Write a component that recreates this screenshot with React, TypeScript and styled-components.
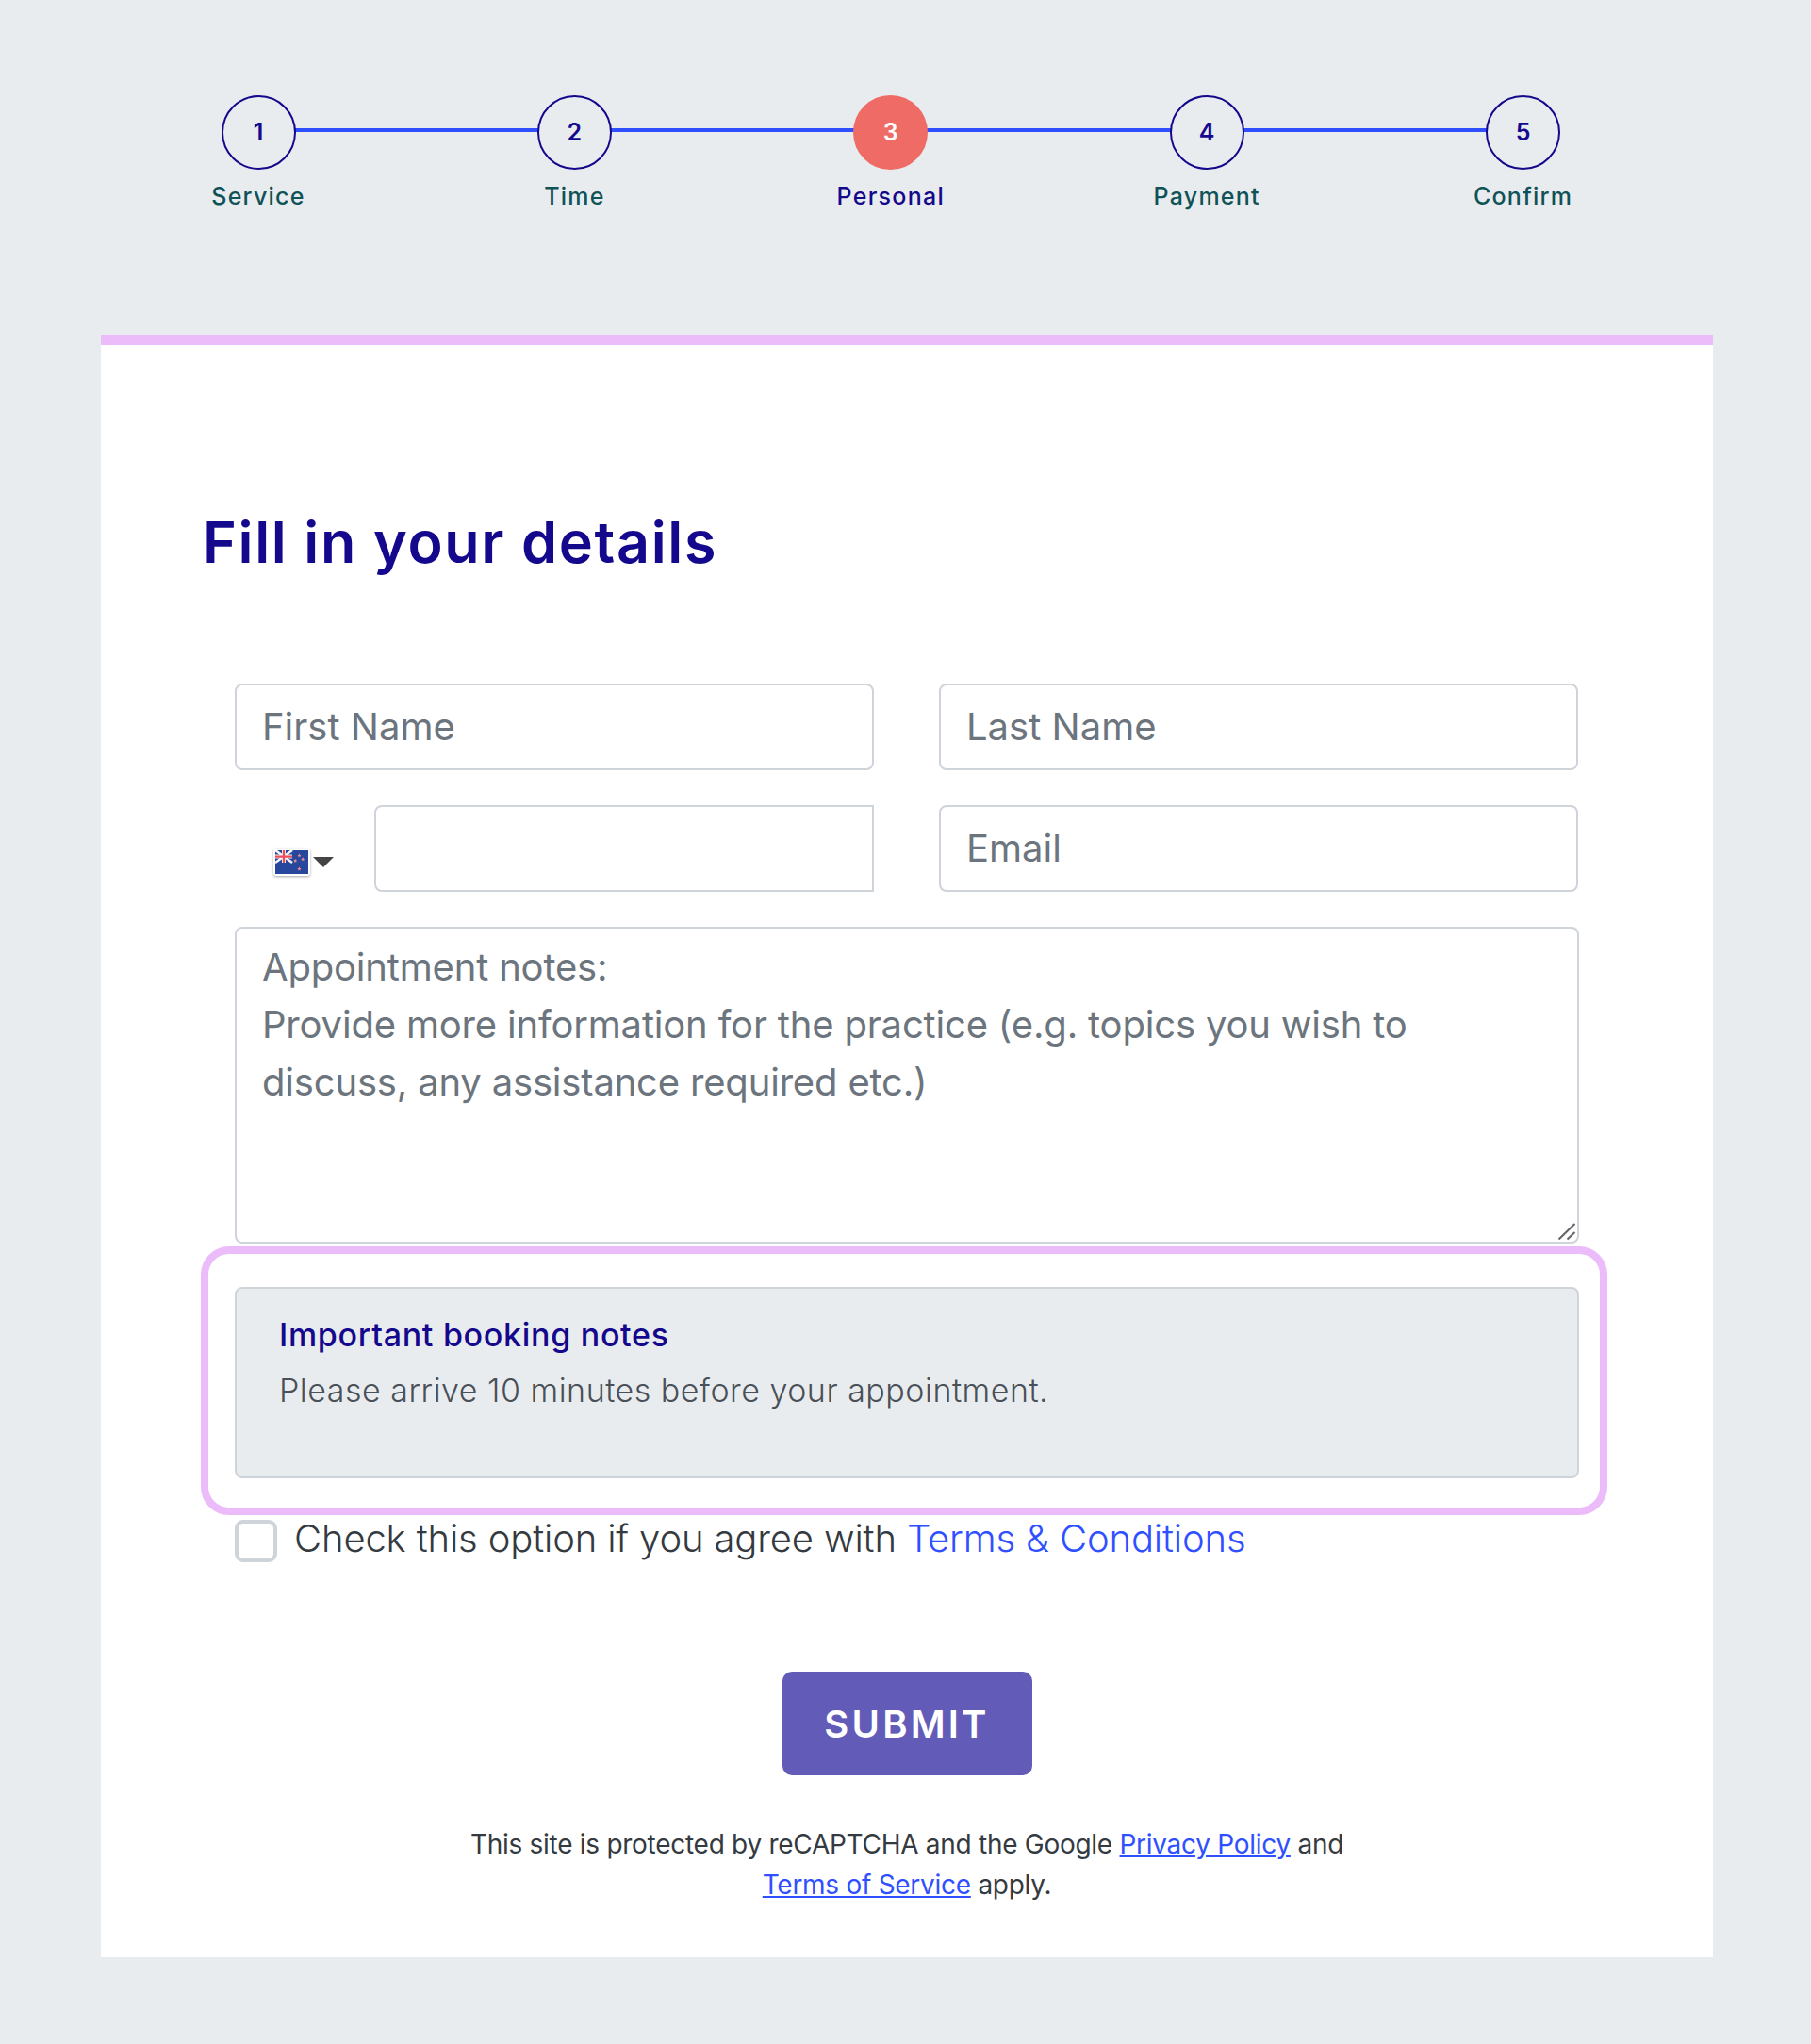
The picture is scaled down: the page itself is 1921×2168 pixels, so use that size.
import React from "react";
import styled, { createGlobalStyle } from "styled-components";

const steps = [
  { n: 1, label: "Service" },
  { n: 2, label: "Time" },
  { n: 3, label: "Personal", active: true },
  { n: 4, label: "Payment" },
  { n: 5, label: "Confirm" },
];

const starPoints = [
  [24, 5],
  [27.5, 8.5],
  [20, 10],
  [24, 18],
];

function Flag() {
  return (
    <svg width="35" height="25" viewBox="0 0 33 23" preserveAspectRatio="none">
      <rect width="33" height="23" fill="#27479c" />
      <path d="M0 0L17 12M17 0L0 12" stroke="#f3f3f6" strokeWidth="2.4" />
      <path d="M8.5 0V12M0 6H17" stroke="#f3f3f6" strokeWidth="3.8" />
      <path d="M8.5 0V12M0 6H17" stroke="#ee4c5c" strokeWidth="2.1" />
      {starPoints.map(([x, y]) => (
        <path
          key={`${x}-${y}`}
          d={`M${x} ${y - 2}L${x + 0.7} ${y - 0.5}L${x + 2} ${y}L${x + 0.8} ${y + 0.6}L${x + 1.2} ${y + 2}L${x} ${y + 1}L${x - 1.2} ${y + 2}L${x - 0.8} ${y + 0.6}L${x - 2} ${y}L${x - 0.7} ${y - 0.5}Z`}
          fill="#f08a94"
        />
      ))}
    </svg>
  );
}

export default function App() {
  return (
    <>
      <GlobalStyle />
      <Page>
        <Stepper>
          {steps.map((s, i) => (
            <Step key={s.n}>
              {i < steps.length - 1 && <Connector />}
              <Circle $active={s.active}>{s.n}</Circle>
              <StepLabel $active={s.active}>{s.label}</StepLabel>
            </Step>
          ))}
        </Stepper>
        <Card>
          <Title>Fill in your details</Title>
          <Form>
            <Row>
              <Input placeholder="First Name" />
              <Input placeholder="Last Name" />
            </Row>
            <Row>
              <PhoneGroup>
                <FlagPicker>
                  <FlagBox><Flag /></FlagBox>
                  <Caret />
                </FlagPicker>
                <PhoneInput />
              </PhoneGroup>
              <Input placeholder="Email" />
            </Row>
            <NotesWrap>
              <Notes placeholder={"Appointment notes:\nProvide more information for the practice (e.g. topics you wish to discuss, any assistance required etc.)"} />
              <Grip width="20" height="20" viewBox="0 0 20 20">
                <path d="M1.5 18.5L18.5 2M10.5 18.5L18.5 11" stroke="#666" strokeWidth="2.2" fill="none" />
              </Grip>
            </NotesWrap>
            <Highlight>
              <BookingBox>
                <BookingTitle>Important booking notes</BookingTitle>
                <BookingText>Please arrive 10 minutes before your appointment.</BookingText>
              </BookingBox>
            </Highlight>
            <AgreeRow>
              <CheckBox />
              <span>Check this option if you agree with <TermsLink href="#">Terms &amp; Conditions</TermsLink></span>
            </AgreeRow>
          </Form>
          <SubmitRow>
            <Submit>SUBMIT</Submit>
          </SubmitRow>
          <Recaptcha>
            This site is protected by reCAPTCHA and the Google <a href="#">Privacy Policy</a> and<br />
            <a href="#">Terms of Service</a> apply.
          </Recaptcha>
        </Card>
      </Page>
    </>
  );
}

const GlobalStyle = createGlobalStyle`
  html, body {
    margin: 0;
    padding: 0;
    background: #e9ecef;
    font-family: "Inter", "Liberation Sans", sans-serif;
  }
  * { box-sizing: border-box; }
`;

const Page = styled.div`
  width: 1921px;
  height: 2168px;
  padding: 101px 104px 0 107px;
`;

const Stepper = styled.div`
  display: grid;
  grid-template-columns: repeat(5, 335.4px);
  margin-left: 67px;
  height: 254px;
`;

const Step = styled.div`
  position: relative;
  display: flex;
  flex-direction: column;
  align-items: center;
  width: 200px;
`;

const Connector = styled.div`
  position: absolute;
  top: 35px;
  left: 100px;
  width: 335px;
  height: 4px;
  background: #3050ff;
`;

const Circle = styled.div<{ $active?: boolean }>`
  position: relative;
  width: 79px;
  height: 79px;
  border-radius: 50%;
  display: flex;
  align-items: center;
  justify-content: center;
  padding-bottom: 2px;
  font-size: 25px;
  font-weight: 600;
  color: ${(p) => (p.$active ? "#fff" : "#14088c")};
  background: ${(p) => (p.$active ? "#ef6c66" : "#e9ecef")};
  border: 2px solid ${(p) => (p.$active ? "#ef6c66" : "#14088c")};
`;

const StepLabel = styled.div<{ $active?: boolean }>`
  margin-top: 12px;
  font-size: 25px;
  line-height: 32px;
  font-weight: 500;
  letter-spacing: 1.25px;
  color: ${(p) => (p.$active ? "#14088c" : "#0f5257")};
`;

const Card = styled.div`
  width: 1710px;
  height: 1721px;
  background: #fff;
  border-top: 11px solid #ebbcf9;
  padding: 172px 0 0 108px;
`;

const Title = styled.h1`
  margin: 0;
  font-size: 61px;
  line-height: 74px;
  font-weight: 600;
  letter-spacing: 1.65px;
  color: #14088c;
`;

const Form = styled.div`
  margin: 113px 0 0 34px;
  width: 1426px;
  display: flex;
  flex-direction: column;
`;

const Row = styled.div`
  display: grid;
  grid-template-columns: 678px 678px;
  column-gap: 69px;
  margin-bottom: 37px;
`;

const Input = styled.input`
  height: 92px;
  width: 100%;
  padding: 0 27px 2px;
  border: 2px solid #ced4da;
  border-radius: 8px;
  background: #fff;
  font: inherit;
  font-size: 40px;
  outline: none;
  &::placeholder { color: #6c757d; opacity: 1; }
`;

const PhoneGroup = styled.div`
  display: flex;
  align-items: stretch;
`;

const FlagPicker = styled.div`
  width: 148px;
  display: flex;
  align-items: center;
  padding: 29px 0 0 41px;
  gap: 3px;
`;

const FlagBox = styled.div`
  display: flex;
  padding: 2px;
  background: #fff;
  border-radius: 3px;
  box-shadow: 0 1px 3px rgba(0, 0, 0, 0.35);
`;

const Caret = styled.div`
  width: 0;
  height: 0;
  border-left: 11px solid transparent;
  border-right: 11px solid transparent;
  border-top: 11px solid #444;
`;

const PhoneInput = styled(Input)`
  flex: 1;
  width: auto;
  min-width: 0;
  border-radius: 8px 0 0 8px;
`;

const NotesWrap = styled.div`
  position: relative;
  height: 336px;
`;

const Notes = styled.textarea`
  display: block;
  height: 100%;
  width: 100%;
  padding: 10px 27px;
  border: 2px solid #ced4da;
  border-radius: 8px;
  font: inherit;
  font-size: 40px;
  line-height: 61px;
  letter-spacing: -0.18px;
  outline: none;
  resize: none;
  &::placeholder { color: #6c757d; opacity: 1; }
`;

const Grip = styled.svg`
  position: absolute;
  right: 3px;
  bottom: 3px;
`;

const Highlight = styled.div`
  margin: 3px 0 0 -36px;
  width: 1492px;
  height: 285px;
  padding: 35px 0 0 28px;
  border: 8px solid #ebbcf9;
  border-radius: 30px;
`;

const BookingBox = styled.div`
  height: 203px;
  width: 1426px;
  padding: 27px 45px;
  background: #e9ecef;
  border: 2px solid #ced4da;
  border-radius: 8px;
`;

const BookingTitle = styled.div`
  font-size: 34px;
  line-height: 44px;
  font-weight: 500;
  letter-spacing: 0.7px;
  color: #14088c;
`;

const BookingText = styled.div`
  margin-top: 15px;
  font-size: 34px;
  line-height: 44px;
  font-weight: 300;
  letter-spacing: 0.5px;
  color: #495057;
`;

const AgreeRow = styled.div`
  display: flex;
  align-items: flex-start;
  gap: 18px;
  margin-top: 5px;
  font-size: 40px;
  line-height: 40px;
  font-weight: 300;
  letter-spacing: -0.15px;
  color: #343a40;
`;

const CheckBox = styled.div`
  width: 45px;
  height: 45px;
  border: 4px solid #ced4da;
  border-radius: 9px;
  background: #fff;
`;

const TermsLink = styled.a`
  color: #3050ff;
  text-decoration: none;
`;

const SubmitRow = styled.div`
  display: flex;
  justify-content: center;
  width: 1494px;
  margin-top: 116px;
`;

const Submit = styled.button`
  width: 265px;
  height: 110px;
  border: none;
  border-radius: 10px;
  background: #635bb8;
  color: #fff;
  font: inherit;
  font-size: 40px;
  font-weight: 600;
  letter-spacing: 3.2px;
`;

const Recaptcha = styled.p`
  width: 1494px;
  margin: 52px 0 0;
  text-align: center;
  font-size: 28px;
  line-height: 43px;
  letter-spacing: -0.28px;
  color: #343a40;
  a { color: #3050ff; }
`;
